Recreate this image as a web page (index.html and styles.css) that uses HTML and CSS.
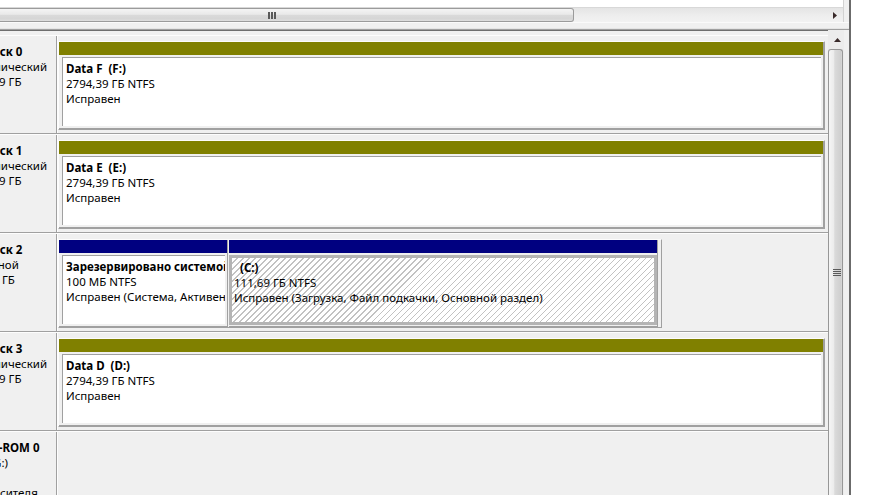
FILE: index.html
```html
<!DOCTYPE html>
<html lang="ru">
<head>
<meta charset="utf-8">
<title>Управление дисками</title>
<link rel="stylesheet" href="styles.css">
</head>
<body>
<div class="window">
  <div class="mmc">
    <div class="top">
      <div class="listpane"></div>
      <div class="hscroll">
        <div class="hthumb">
          <svg class="grip-v" width="8" height="7" viewBox="0 0 8 7"><rect x="0" y="0" width="2" height="7" fill="#5a5a5a"/><rect x="3" y="0" width="2" height="7" fill="#5a5a5a"/><rect x="6" y="0" width="2" height="7" fill="#5a5a5a"/></svg>
        </div>
        <div class="htrack">
          <svg class="arrow-right" width="4" height="7" viewBox="0 0 4 7"><polygon points="0,0 4,3.5 0,7" fill="#3a2a2a"/></svg>
        </div>
      </div>
    </div>
    <div class="splitter"></div>
    <div class="graph">
      <div class="disks">

        <div class="row">
          <div class="label"><div class="label-in">
            <div class="l-title"><svg class="ico" width="16" height="12" viewBox="0 0 16 12"><rect x="1" y="2" width="14" height="8" fill="#8a8a8a"/></svg>Диск 0</div>
            <div>Динамический</div>
            <div>2794,39 ГБ</div>
            <div>В сети</div>
          </div></div>
          <div class="area">
            <div class="frame" style="width:767px">
              <div class="part" style="width:765px">
                <div class="bar olive"></div>
                <div class="body"><div class="box"><b>Data F  (F:)</b>
2794,39 ГБ NTFS
Исправен</div></div>
              </div>
            </div>
          </div>
        </div>

        <div class="row">
          <div class="label"><div class="label-in">
            <div class="l-title"><svg class="ico" width="16" height="12" viewBox="0 0 16 12"><rect x="1" y="2" width="14" height="8" fill="#8a8a8a"/></svg>Диск 1</div>
            <div>Динамический</div>
            <div>2794,39 ГБ</div>
            <div>В сети</div>
          </div></div>
          <div class="area">
            <div class="frame" style="width:767px">
              <div class="part" style="width:765px">
                <div class="bar olive"></div>
                <div class="body"><div class="box"><b>Data E  (E:)</b>
2794,39 ГБ NTFS
Исправен</div></div>
              </div>
            </div>
          </div>
        </div>

        <div class="row">
          <div class="label"><div class="label-in">
            <div class="l-title"><svg class="ico" width="16" height="12" viewBox="0 0 16 12"><rect x="1" y="2" width="14" height="8" fill="#8a8a8a"/></svg>Диск 2</div>
            <div>Основной</div>
            <div>111,79 ГБ</div>
            <div>В сети</div>
          </div></div>
          <div class="area">
            <div class="frame" style="width:604px">
              <div class="part gap" style="width:169px">
                <div class="bar navy"></div>
                <div class="body"><div class="box"><b>Зарезервировано системой</b>
100 МБ NTFS
Исправен (Система, Активен, Основной раздел)</div></div>
              </div>
              <div class="part" style="width:429px">
                <div class="bar navy"></div>
                <div class="body sel"><div class="box hatch"><b>  (C:)</b>
111,69 ГБ NTFS
Исправен (Загрузка, Файл подкачки, Основной раздел)</div></div>
              </div>
            </div>
          </div>
        </div>

        <div class="row">
          <div class="label"><div class="label-in">
            <div class="l-title"><svg class="ico" width="16" height="12" viewBox="0 0 16 12"><rect x="1" y="2" width="14" height="8" fill="#8a8a8a"/></svg>Диск 3</div>
            <div>Динамический</div>
            <div>2794,39 ГБ</div>
            <div>В сети</div>
          </div></div>
          <div class="area">
            <div class="frame" style="width:767px">
              <div class="part" style="width:765px">
                <div class="bar olive"></div>
                <div class="body"><div class="box"><b>Data D  (D:)</b>
2794,39 ГБ NTFS
Исправен</div></div>
              </div>
            </div>
          </div>
        </div>

        <div class="row last">
          <div class="label"><div class="label-in">
            <div class="l-title"><svg class="ico" width="16" height="12" viewBox="0 0 16 12"><circle cx="8" cy="6" r="5" fill="#9a9a9a"/></svg>CD-ROM 0</div>
            <div>DVD (G:)</div>
            <div>&nbsp;</div>
            <div>Нет носителя</div>
          </div></div>
          <div class="area"></div>
        </div>

      </div>
      <div class="vscroll">
        <div class="vbtn">
          <svg class="arrow-up" width="7" height="4" viewBox="0 0 7 4"><polygon points="0,4 3.5,0 7,4" fill="#3a2a2a"/></svg>
        </div>
        <div class="vthumb">
          <svg class="grip-h" width="8" height="7" viewBox="0 0 8 7"><rect x="0" y="0" width="8" height="1" fill="#5a5a5a"/><rect x="0" y="2" width="8" height="1" fill="#5a5a5a"/><rect x="0" y="4" width="8" height="1" fill="#5a5a5a"/><rect x="0" y="6" width="8" height="1" fill="#5a5a5a"/></svg>
        </div>
      </div>
      <div class="edge"></div>
    </div>
  </div>
  <div class="desk"></div>
</div>
</body>
</html>
```

FILE: styles.css
```css
* { box-sizing: border-box; }
html, body { margin: 0; padding: 0; }
body {
  width: 882px;
  height: 495px;
  overflow: hidden;
  background: #fff;
  font-family: "Noto Sans", "Open Sans", sans-serif;
  font-size: 11.5px;
  color: #000;
}
.window { display: flex; height: 495px; }
.mmc {
  width: 851px;
  height: 495px;
  border-right: 2px solid #6b6b6b;
  display: flex;
  flex-direction: column;
  background: #f0f0f0;
}
.top { width: 844px; border-right: 1px solid #d2d2d2; }
.listpane { height: 7px; background: #fff; }
.hscroll {
  height: 15px;
  display: flex;
  background: linear-gradient(#e4e4e4, #ededed 50%, #f2f2f2);
  border-top: 1px solid #d8d8d8;
}
.hthumb {
  width: 574px;
  height: 100%;
  border: 1px solid #9b9b9b;
  border-left: none;
  border-radius: 0 3px 3px 0;
  background: linear-gradient(#f4f4f4 0%, #e9e9e9 45%, #dadada 50%, #d6d6d6 80%, #dedede 100%);
  display: flex;
  align-items: center;
  padding-left: 268px;
}
.htrack { flex: 1; display: flex; align-items: center; justify-content: flex-end; padding-right: 6px; }
.splitter { height: 7px; background: #f0f0f0; border-top: 1px solid #fafafa; border-bottom: 1px solid #e4e4e4; }
.graph {
  flex: 1;
  display: flex;
  border-top: 1px solid #a0a0a0;
  box-shadow: inset 0 1px 0 #6e6e6e;
  min-height: 0;
}
.disks { width: 828px; padding-top: 5px; overflow: hidden; }
.row {
  height: 99px;
  display: flex;
  border-top: 1px solid #fdfdfd;
  border-bottom: 1px solid #a0a0a0;
}
.row.last { height: 80px; border-bottom: none; }
.label {
  width: 57px;
  border-right: 1px solid #a0a0a0;
  overflow: hidden;
  white-space: nowrap;
  line-height: 15px;
  padding-top: 8px;
}
.label-in { margin-left: -37px; }
.l-title { font-weight: bold; display: flex; align-items: center; }
.ico { margin-right: 4px; flex: none; }
.area { flex: 1; border-left: 1px solid #fdfdfd; }
.frame {
  margin-top: 5px;
  height: 89px;
  display: flex;
  border: 1px solid;
  border-color: #fcfcfc #a0a0a0 #a0a0a0 #fcfcfc;
}
.part {
  height: 100%;
  display: flex;
  flex-direction: column;
  border-right: 1px solid #a0a0a0;
  border-bottom: 1px solid #a0a0a0;
}
.part.gap { margin-right: 1px; }
.bar { height: 13px; flex: none; }
.olive { background: #808000; }
.navy { background: #000080; }
.body { flex: 1; display: flex; padding: 2px 2px 2px 3px; min-height: 0; }
.box {
  flex: 1;
  background: #fff;
  border-top: 1px solid #a0a0a0;
  border-left: 1px solid #a0a0a0;
  padding: 3px 0 0 3px;
  line-height: 15px;
  white-space: pre;
  overflow: hidden;
}
.body.sel { padding: 2px 0 1px 0; }
.box.hatch {
  border: 3px solid #b4b4b4;
  padding: 2px 0 0 2px;
  background: repeating-linear-gradient(135deg, #ffffff 0 3.3px, #c2c2c2 3.3px 4.25px);
}
.vscroll { width: 16px; display: flex; flex-direction: column; background: #ececec; }
.vbtn { height: 19px; display: flex; justify-content: center; padding-top: 8px; padding-left: 2px; }
.vthumb {
  flex: 1;
  width: 15px;
  border: 1px solid #979797;
  border-bottom: none;
  border-radius: 3px 3px 0 0;
  background: linear-gradient(90deg, #f5f5f5, #ececec 35%, #dadada 45%, #cfcfcf 90%, #d8d8d8);
  display: flex;
  justify-content: center;
  padding-top: 219px;
  padding-left: 2px;
}
.edge { width: 5px; background: #f0f0f0; }
.desk { flex: 1; background: #fff; }
```
